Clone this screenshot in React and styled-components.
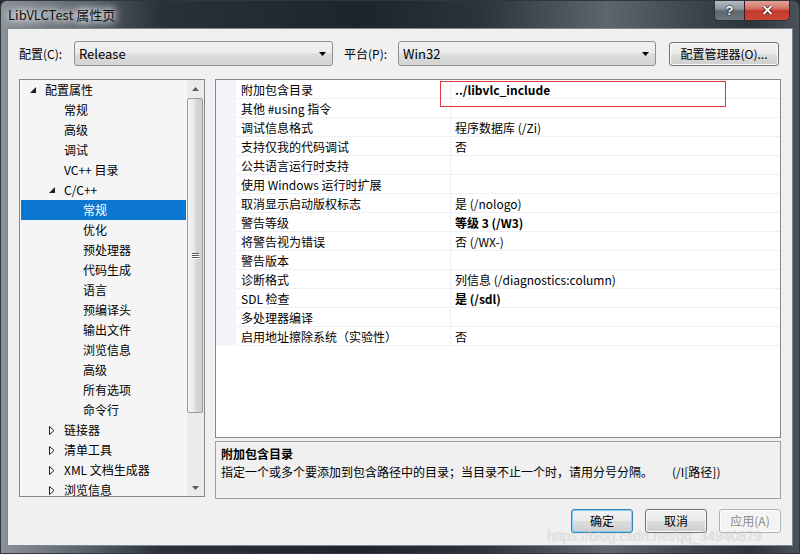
import React from 'react';
import styled, { createGlobalStyle } from 'styled-components';

const GlobalStyle = createGlobalStyle`
  html, body {
    margin: 0;
    padding: 0;
    background: #262c34;
  }
  body {
    font-family: "Noto Sans CJK SC", "Noto Sans", sans-serif;
    font-size: 12px;
    color: #000;
  }
`;

const Window = styled.div`
  position: relative;
  display: flex;
  flex-direction: column;
  width: 800px;
  height: 554px;
  box-sizing: border-box;
  overflow: hidden;
  border-radius: 7px 7px 0 0;
  border: 1px solid #30363e;
  background: linear-gradient(
    90deg,
    #8c9298 0%,
    #5b636c 10%,
    #2a313a 20%,
    #1d242d 45%,
    #2c333b 60%,
    #5f656c 76%,
    #3a4149 88%,
    #2d343c 94%,
    #4a5159 100%
  );
`;

const TitleBar = styled.div`
  display: flex;
  align-items: flex-start;
  height: 27px;
  flex-shrink: 0;
`;

const Title = styled.div`
  margin: 6px 0 0 7px;
  font-size: 13px;
  line-height: 16px;
  color: #111;
  text-shadow: 0 0 6px #fff, 0 0 10px #fff, 0 0 14px rgba(255, 255, 255, 0.9);
`;

const Caption = styled.div`
  display: flex;
  margin: -1px 9px 0 auto;
  border: 1px solid #2a3038;
  border-top: none;
  border-radius: 0 0 5px 5px;
  overflow: hidden;
`;

const CaptionBtn = styled.div`
  display: flex;
  align-items: center;
  justify-content: center;
  width: ${(p) => p.$w}px;
  height: 20px;
  box-sizing: border-box;
  color: #fff;
  font-family: "Liberation Sans", Arial, sans-serif;
  font-weight: bold;
  font-size: 13px;
  text-shadow: 0 0 2px #000, 0 0 1px #000;
  border-left: ${(p) => (p.$close ? '1px solid #3a1a1a' : 'none')};
  background: ${(p) =>
    p.$close
      ? 'linear-gradient(#e6a79e 0%, #d7786c 40%, #c4392b 55%, #c8473a 100%)'
      : 'linear-gradient(#b8c0c8 0%, #8d959e 45%, #5d6670 55%, #6e7781 100%)'};
`;

const Client = styled.div`
  flex: 1;
  display: flex;
  flex-direction: column;
  margin: 0 6px 7px 6px;
  padding: 12px 11px 0 11px;
  background: #f0f0f0;
  border: 1px solid #7e8891;
`;

const TopRow = styled.div`
  display: flex;
  align-items: center;
  height: 25px;
`;

const Label = styled.div`
  width: ${(p) => p.$w}px;
  margin-left: ${(p) => p.$ml || 0}px;
  line-height: 16px;
  flex-shrink: 0;
`;

const Select = styled.div`
  display: flex;
  align-items: center;
  justify-content: space-between;
  width: ${(p) => p.$w}px;
  height: 25px;
  box-sizing: border-box;
  padding: 0 6px 0 4px;
  border: 1px solid #8e8f8f;
  border-radius: 3px;
  background: linear-gradient(#f2f2f2 0%, #ebebeb 48%, #dddddd 52%, #d4d4d4 100%);
  font-size: 13px;
  line-height: 16px;
`;

const Button = styled.div`
  display: flex;
  align-items: center;
  justify-content: center;
  width: ${(p) => p.$w}px;
  height: 24px;
  margin-left: ${(p) => p.$ml || 0}px;
  box-sizing: border-box;
  border: 1px solid ${(p) => (p.$default ? '#3c7fb1' : p.$disabled ? '#adb2b5' : '#707070')};
  border-radius: 3px;
  color: ${(p) => (p.$disabled ? '#8a8a8a' : '#000')};
  background: ${(p) =>
    p.$disabled
      ? '#f4f4f4'
      : 'linear-gradient(#f2f2f2 0%, #ebebeb 48%, #dddddd 52%, #cfcfcf 100%)'};
  box-shadow: ${(p) => (p.$default ? 'inset 0 0 0 1px #7ed2f6' : 'inset 0 0 0 1px #fcfcfc')};
  line-height: 16px;
  font-size: 12px;
`;

const Main = styled.div`
  display: flex;
  gap: 10px;
  margin-top: 13px;
  height: 420px;
`;

const Tree = styled.div`
  display: flex;
  width: 186px;
  height: 418px;
  box-sizing: border-box;
  border: 1px solid #828790;
  background: #f5f5f5;
  overflow: hidden;
`;

const TreeList = styled.div`
  flex: 1;
  padding-left: 1px;
  overflow: hidden;
`;

const TreeRow = styled.div`
  display: flex;
  align-items: center;
  height: 20px;
  padding-left: ${(p) => 9 + 19 * p.$level}px;
  background: ${(p) => (p.$selected ? '#0b77d0' : 'transparent')};
  color: ${(p) => (p.$selected ? '#fff' : '#000')};
  white-space: nowrap;
  line-height: 16px;
`;

const Twisty = styled.div`
  display: flex;
  align-items: center;
  width: 15px;
  height: 20px;
  flex-shrink: 0;
`;

const Scrollbar = styled.div`
  display: flex;
  flex-direction: column;
  width: 17px;
  background: #ebebeb;
  border-left: 1px solid #f7f7f7;
`;

const ScrollBtn = styled.div`
  display: flex;
  align-items: center;
  justify-content: center;
  height: 17px;
  flex-shrink: 0;
`;

const Track = styled.div`
  flex: 1;
  padding: 1px 1px 0 0;
`;

const Thumb = styled.div`
  display: flex;
  align-items: center;
  justify-content: center;
  height: 315px;
  box-sizing: border-box;
  border: 1px solid #9a9a9a;
  border-radius: 2px;
  background: linear-gradient(90deg, #f3f3f3 0%, #e9e9e9 45%, #d8d8d8 55%, #cfcfcf 100%);
`;

const Grip = styled.div`
  display: flex;
  flex-direction: column;
  gap: 1px;
  & > span {
    display: block;
    width: 7px;
    height: 1px;
    background: #555;
    box-shadow: 0 1px 0 #fff;
  }
`;

const RightCol = styled.div`
  flex: 1;
  display: flex;
  flex-direction: column;
`;

const Grid = styled.div`
  position: relative;
  height: 359px;
  box-sizing: border-box;
  border: 1px solid #828790;
  background: #fff;
  overflow: hidden;
`;

const GridRow = styled.div`
  display: grid;
  grid-template-columns: 20px 215px 1fr;
  height: 19px;
`;

const Gutter = styled.div`
  background: #f3f5fa;
`;

const Cell = styled.div`
  display: flex;
  align-items: center;
  box-sizing: border-box;
  padding: 2px 0 0 ${(p) => p.$pl}px;
  border-bottom: 1px solid #eef0f6;
  border-right: ${(p) => (p.$name ? '1px solid #eef0f6' : 'none')};
  font-weight: ${(p) => (p.$bold ? 'bold' : 'normal')};
  white-space: nowrap;
  line-height: 16px;
`;

const Highlight = styled.div`
  position: absolute;
  left: 224px;
  top: 1px;
  width: 286px;
  height: 26px;
  box-sizing: border-box;
  border: 1px solid #e2393c;
  pointer-events: none;
`;

const Desc = styled.div`
  margin-top: 3px;
  height: 58px;
  box-sizing: border-box;
  padding: 3px 5px;
  border: 1px solid #a0a0a0;
  background: #f0f0f0;
  line-height: 18px;
`;

const DescTitle = styled.div`
  font-weight: bold;
`;

const DescText = styled.div`
  display: flex;
  white-space: nowrap;
`;

const DescMain = styled.span`
  width: 451px;
`;

const Footer = styled.div`
  display: flex;
  justify-content: flex-end;
  margin-top: 10px;
  gap: 12px;
`;

const Watermark = styled.div`
  position: absolute;
  left: 546px;
  top: 527px;
  font-family: "Liberation Sans", Arial, sans-serif;
  font-size: 14px;
  color: rgba(255, 255, 255, 0.45);
  text-shadow: 0 0 1px rgba(0, 0, 0, 0.2);
  white-space: nowrap;
  pointer-events: none;
`;

const DropArrow = () => (
  <svg width="7" height="4" viewBox="0 0 7 4">
    <path d="M0 0H7L3.5 4Z" fill="#000" />
  </svg>
);

const ExpandedIcon = ({ color }) => (
  <svg width="6" height="6" viewBox="0 0 6 6">
    <path d="M6 0V6H0Z" fill={color} />
  </svg>
);

const CollapsedIcon = () => (
  <svg width="6" height="9" viewBox="0 0 6 9">
    <path d="M0.5 0.5L5 4.5L0.5 8.5Z" fill="#fff" stroke="#1e1e1e" strokeWidth="1" />
  </svg>
);

const SmallArrow = ({ up }) => (
  <svg width="7" height="4" viewBox="0 0 7 4">
    <path d={up ? 'M0 4H7L3.5 0Z' : 'M0 0H7L3.5 4Z'} fill="#5a5a5a" />
  </svg>
);

const treeItems = [
  { label: '配置属性', level: 0, twisty: 'open' },
  { label: '常规', level: 1 },
  { label: '高级', level: 1 },
  { label: '调试', level: 1 },
  { label: 'VC++ 目录', level: 1 },
  { label: 'C/C++', level: 1, twisty: 'open' },
  { label: '常规', level: 2, selected: true },
  { label: '优化', level: 2 },
  { label: '预处理器', level: 2 },
  { label: '代码生成', level: 2 },
  { label: '语言', level: 2 },
  { label: '预编译头', level: 2 },
  { label: '输出文件', level: 2 },
  { label: '浏览信息', level: 2 },
  { label: '高级', level: 2 },
  { label: '所有选项', level: 2 },
  { label: '命令行', level: 2 },
  { label: '链接器', level: 1, twisty: 'closed' },
  { label: '清单工具', level: 1, twisty: 'closed' },
  { label: 'XML 文档生成器', level: 1, twisty: 'closed' },
  { label: '浏览信息', level: 1, twisty: 'closed' },
];

const props = [
  { name: '附加包含目录', value: '../libvlc_include', bold: true },
  { name: '其他 #using 指令', value: '' },
  { name: '调试信息格式', value: '程序数据库 (/Zi)' },
  { name: '支持仅我的代码调试', value: '否' },
  { name: '公共语言运行时支持', value: '' },
  { name: '使用 Windows 运行时扩展', value: '' },
  { name: '取消显示启动版权标志', value: '是 (/nologo)' },
  { name: '警告等级', value: '等级 3 (/W3)', bold: true },
  { name: '将警告视为错误', value: '否 (/WX-)' },
  { name: '警告版本', value: '' },
  { name: '诊断格式', value: '列信息 (/diagnostics:column)' },
  { name: 'SDL 检查', value: '是 (/sdl)', bold: true },
  { name: '多处理器编译', value: '' },
  { name: '启用地址擦除系统（实验性）', value: '否' },
];

export default function App() {
  return (
    <>
      <GlobalStyle />
      <Window>
        <TitleBar>
          <Title>LibVLCTest 属性页</Title>
          <Caption>
            <CaptionBtn $w={29}>?</CaptionBtn>
            <CaptionBtn $w={45} $close>
              <svg width="11" height="10" viewBox="0 0 11 10">
                <path d="M1.5 1L9.5 9M9.5 1L1.5 9" stroke="#3a0d0d" strokeWidth="3.4" />
                <path d="M1.5 1L9.5 9M9.5 1L1.5 9" stroke="#fff" strokeWidth="2" />
              </svg>
            </CaptionBtn>
          </Caption>
        </TitleBar>

        <Client>
          <TopRow>
            <Label $w={55}>配置(C):</Label>
            <Select $w={259}>
              <span>Release</span>
              <DropArrow />
            </Select>
            <Label $w={54} $ml={11}>平台(P):</Label>
            <Select $w={258}>
              <span>Win32</span>
              <DropArrow />
            </Select>
            <Button $w={110} $ml={13}>配置管理器(O)...</Button>
          </TopRow>

          <Main>
            <Tree>
              <TreeList>
                {treeItems.map((it, i) => (
                  <TreeRow key={i} $level={it.level} $selected={it.selected}>
                    <Twisty>
                      {it.twisty === 'open' && <ExpandedIcon color="#1e1e1e" />}
                      {it.twisty === 'closed' && <CollapsedIcon />}
                    </Twisty>
                    {it.label}
                  </TreeRow>
                ))}
              </TreeList>
              <Scrollbar>
                <ScrollBtn>
                  <SmallArrow up />
                </ScrollBtn>
                <Track>
                  <Thumb>
                    <Grip>
                      <span />
                      <span />
                      <span />
                    </Grip>
                  </Thumb>
                </Track>
                <ScrollBtn>
                  <SmallArrow />
                </ScrollBtn>
              </Scrollbar>
            </Tree>

            <RightCol>
              <Grid>
                {props.map((p, i) => (
                  <GridRow key={i}>
                    <Gutter />
                    <Cell $name $pl={5}>{p.name}</Cell>
                    <Cell $pl={4} $bold={p.bold}>{p.value}</Cell>
                  </GridRow>
                ))}
                <Highlight />
              </Grid>
              <Desc>
                <DescTitle>附加包含目录</DescTitle>
                <DescText>
                  <DescMain>指定一个或多个要添加到包含路径中的目录；当目录不止一个时，请用分号分隔。</DescMain>
                  <span>(/I[路径])</span>
                </DescText>
              </Desc>
            </RightCol>
          </Main>

          <Footer>
            <Button $w={62} $default>确定</Button>
            <Button $w={62}>取消</Button>
            <Button $w={62} $disabled>应用(A)</Button>
          </Footer>
        </Client>
        <Watermark>https://blog.csdn.net/qq_34940879</Watermark>
      </Window>
    </>
  );
}
